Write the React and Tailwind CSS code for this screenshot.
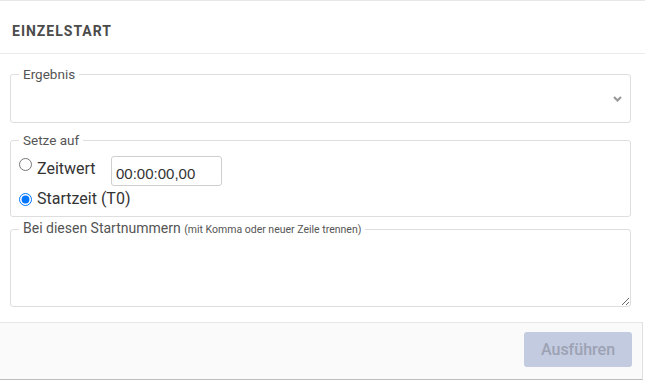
export default function App() {
  return (
    <div className="w-[645px] h-[380px] bg-white border-t border-[#e8e8e8] font-['Roboto',sans-serif] flex flex-col">
      <div className="h-[53px] border-b border-[#ebebeb] pl-3 pt-[22px]">
        <h2 className="text-[14px] leading-[16px] font-bold tracking-[1px] text-[#4b4b4b]">EINZELSTART</h2>
      </div>

      <div className="w-[643px] pl-[10px] pr-[12px] pt-[12px]">
        <fieldset className="border border-[#dedede] rounded-[3px]">
          <legend className="ml-[8px] px-[4px] text-[13.5px] leading-[16px] text-[#555]">Ergebnis</legend>
          <div className="h-[40px] flex items-center justify-end pr-[8px] pb-[6px]">
            <svg width="9" height="6" viewBox="0 0 9 6" fill="none">
              <polyline points="1,1 4.5,4.5 8,1" stroke="#9a9a9a" strokeWidth="2.2" />
            </svg>
          </div>
        </fieldset>

        <fieldset className="mt-[9px] border border-[#dedede] rounded-[3px] pl-[8px] pt-[8px] pb-[7px]">
          <legend className="ml-0 px-[4px] text-[13.5px] leading-[16px] text-[#555]">Setze auf</legend>
          <div className="flex items-start">
            <input type="radio" name="setze" className="m-0 mt-[2px] w-[13px] h-[13px]" />
            <span className="ml-[5px] mt-[3px] w-[74px] text-[16px] leading-[20px] text-[#333]">Zeitwert</span>
            <input
              type="text"
              defaultValue="00:00:00,00"
              className="w-[111px] h-[30px] border border-[#cfcfcf] rounded-[3px] px-[4px] pt-[4px] font-['Liberation_Sans',sans-serif] text-[15px] text-[#333] outline-none"
            />
          </div>
          <div className="flex items-start mt-[3px]">
            <input type="radio" name="setze" defaultChecked className="m-0 mt-[4px] w-[13px] h-[13px]" />
            <span className="ml-[5px] text-[16px] leading-[20px] text-[#333]">Startzeit (T0)</span>
          </div>
        </fieldset>

        <fieldset className="mt-[3px] border border-[#dedede] rounded-[3px]">
          <legend className="ml-[8px] px-[4px] text-[14px] leading-[16px] text-[#555]">
            Bei diesen Startnummern <span className="text-[10.5px]">(mit Komma oder neuer Zeile trennen)</span>
          </legend>
          <textarea className="block w-full h-[68px] border-0 outline-none resize-y bg-transparent" />
        </fieldset>
      </div>

      <div className="mt-[15px] w-[643px] h-[58px] bg-[#fafafa] border-t border-r border-b border-t-[#e6e6e6] border-r-[#e0e0e0] border-b-[#bcbcbc] flex justify-end items-start pt-[9px] pr-[10px]">
        <button
          type="button"
          disabled
          className="w-[108px] h-[35px] rounded-[3px] bg-[#c3cbe0] text-[#9ca2b3] text-[16px] font-medium"
        >
          Ausführen
        </button>
      </div>
    </div>
  );
}
